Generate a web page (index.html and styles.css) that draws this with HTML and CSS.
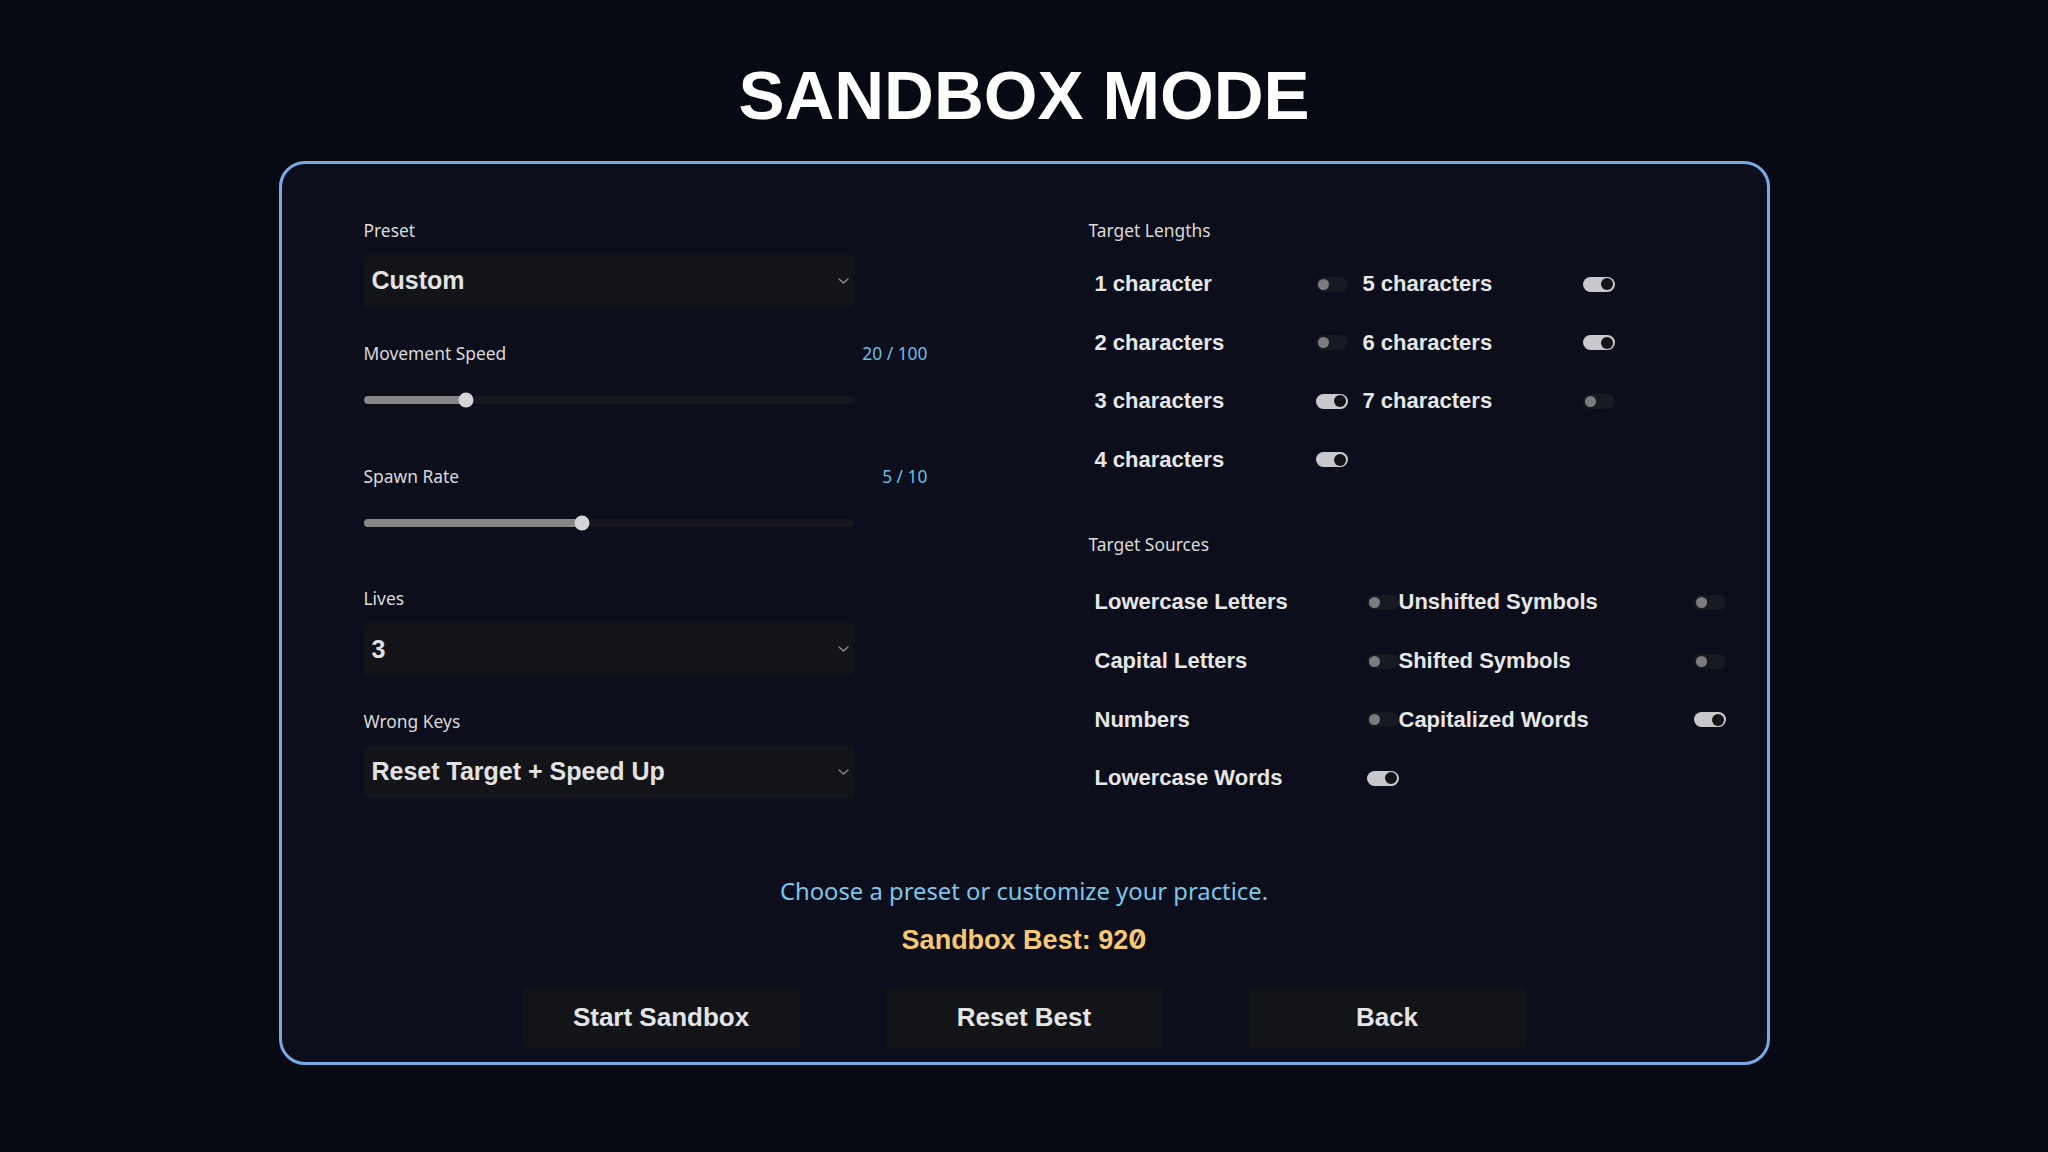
FILE: index.html
```html
<!DOCTYPE html>
<html lang="en">
<head>
<meta charset="utf-8">
<title>Sandbox Mode</title>
<link rel="stylesheet" href="styles.css">
</head>
<body>
<main class="screen">
  <h1 class="title">SANDBOX MODE</h1>
  <section class="panel">
    <div class="columns">
      <div class="settings">
        <div class="field">
          <div class="field-head"><span class="label">Preset</span></div>
          <div class="select">
            <span class="select-value">Custom</span>
            <svg class="chevron" viewBox="0 0 11 6" width="11" height="6"><path d="M1 1L5.5 5L10 1"/></svg>
          </div>
        </div>
        <div class="field">
          <div class="field-head"><span class="label">Movement Speed</span><span class="value">20 / 100</span></div>
          <div class="slider-wrap">
            <div class="slider">
              <div class="fill" style="width:102px"></div>
              <div class="thumb" style="left:102px"></div>
            </div>
          </div>
        </div>
        <div class="field">
          <div class="field-head"><span class="label">Spawn Rate</span><span class="value">5 / 10</span></div>
          <div class="slider-wrap">
            <div class="slider">
              <div class="fill" style="width:218px"></div>
              <div class="thumb" style="left:218px"></div>
            </div>
          </div>
        </div>
        <div class="field">
          <div class="field-head"><span class="label">Lives</span></div>
          <div class="select">
            <span class="select-value">3</span>
            <svg class="chevron" viewBox="0 0 11 6" width="11" height="6"><path d="M1 1L5.5 5L10 1"/></svg>
          </div>
        </div>
        <div class="field">
          <div class="field-head"><span class="label">Wrong Keys</span></div>
          <div class="select">
            <span class="select-value">Reset Target + Speed Up</span>
            <svg class="chevron" viewBox="0 0 11 6" width="11" height="6"><path d="M1 1L5.5 5L10 1"/></svg>
          </div>
        </div>
      </div>

      <div class="targets">
        <div class="section">
          <div class="label">Target Lengths</div>
          <div class="toggle-grid lengths">
            <div class="toggle-item"><span class="item-label">1 character</span><span class="toggle"></span></div>
            <div class="toggle-item"><span class="item-label">2 characters</span><span class="toggle"></span></div>
            <div class="toggle-item"><span class="item-label">3 characters</span><span class="toggle on"></span></div>
            <div class="toggle-item"><span class="item-label">4 characters</span><span class="toggle on"></span></div>
            <div class="toggle-item"><span class="item-label">5 characters</span><span class="toggle on"></span></div>
            <div class="toggle-item"><span class="item-label">6 characters</span><span class="toggle on"></span></div>
            <div class="toggle-item"><span class="item-label">7 characters</span><span class="toggle"></span></div>
          </div>
        </div>
        <div class="section sources-section">
          <div class="label">Target Sources</div>
          <div class="toggle-grid sources">
            <div class="toggle-item"><span class="item-label">Lowercase Letters</span><span class="toggle"></span></div>
            <div class="toggle-item"><span class="item-label">Capital Letters</span><span class="toggle"></span></div>
            <div class="toggle-item"><span class="item-label">Numbers</span><span class="toggle"></span></div>
            <div class="toggle-item"><span class="item-label">Lowercase Words</span><span class="toggle on"></span></div>
            <div class="toggle-item"><span class="item-label">Unshifted Symbols</span><span class="toggle"></span></div>
            <div class="toggle-item"><span class="item-label">Shifted Symbols</span><span class="toggle"></span></div>
            <div class="toggle-item"><span class="item-label">Capitalized Words</span><span class="toggle on"></span></div>
          </div>
        </div>
      </div>
    </div>

    <div class="footer">
      <p class="hint">Choose a preset or customize your practice.</p>
      <p class="best">Sandbox Best: 92<span class="zero">0</span></p>
      <div class="buttons">
        <button class="btn">Start Sandbox</button>
        <button class="btn">Reset Best</button>
        <button class="btn">Back</button>
      </div>
    </div>
  </section>
</main>
</body>
</html>
```

FILE: styles.css
```css
* {
  box-sizing: border-box;
}

html, body {
  margin: 0;
  padding: 0;
}

body {
  background: #080a13;
  color: #e6e6e6;
  font-family: "Liberation Sans", Arial, sans-serif;
  width: 2048px;
  height: 1152px;
  overflow: hidden;
}

.screen {
  display: flex;
  flex-direction: column;
  align-items: center;
}

.title {
  margin: 56px 0 0;
  height: 105px;
  font-family: "Liberation Sans", Arial, sans-serif;
  font-weight: 700;
  font-size: 69px;
  line-height: 80px;
  color: #ffffff;
  letter-spacing: 0;
}

.panel {
  width: 1491px;
  border: 3px solid #7aaae6;
  border-radius: 26px;
  background: #0c0e1b;
  padding: 54px 0 14px;
}

.columns {
  display: grid;
  grid-template-columns: 564px 1fr;
  column-gap: 161px;
  align-items: start;
  padding: 0 41px 0 82px;
}

.settings {
  display: flex;
  flex-direction: column;
  gap: 33.75px;
}

.field {
  display: flex;
  flex-direction: column;
  gap: 12.5px;
}

.field-head {
  display: flex;
  justify-content: space-between;
  align-items: center;
  height: 24px;
}

.label {
  font-family: "Noto Sans", "Open Sans", sans-serif;
  font-size: 17.4px;
  line-height: 24px;
  color: #dadada;
}

.value {
  font-family: "Noto Sans", "Open Sans", sans-serif;
  font-size: 17.4px;
  line-height: 24px;
  color: #6cbde6;
}

.select {
  width: 490px;
  height: 52.5px;
  background: #131418;
  border-radius: 3px;
  display: flex;
  align-items: center;
  justify-content: space-between;
  padding: 0 5px 0 8px;
}

.select-value {
  font-family: "Liberation Sans", Arial, sans-serif;
  font-weight: 700;
  font-size: 25px;
  color: #e2e2e2;
}

.chevron {
  display: block;
}

.chevron path {
  fill: none;
  stroke: #8d8d8f;
  stroke-width: 1.4;
  stroke-linecap: round;
  stroke-linejoin: round;
}

.slider-wrap {
  height: 52.5px;
  padding-bottom: 7px;
  display: flex;
  align-items: center;
}

.slider {
  position: relative;
  width: 490px;
  height: 8px;
  border-radius: 4px;
  background: #15171c;
}

.fill {
  height: 100%;
  border-radius: 4px;
  background: #878787;
}

.thumb {
  position: absolute;
  top: 50%;
  width: 15px;
  height: 15px;
  border-radius: 50%;
  background: #d4d4d6;
  transform: translate(-50%, -50%);
}

.targets {
  display: flex;
  flex-direction: column;
}

.toggle-grid {
  display: grid;
  grid-auto-flow: column;
  grid-template-rows: repeat(4, 36px);
  row-gap: 22.6px;
  padding-left: 6px;
}

.lengths {
  margin-top: 24.2px;
  grid-template-columns: 253px 252px;
  column-gap: 15px;
}

.sources-section {
  margin-top: 54px;
}

.sources {
  margin-top: 28.5px;
  grid-template-columns: 304px 327px;
  column-gap: 0;
}

.toggle-item {
  display: flex;
  align-items: center;
  justify-content: space-between;
}

.item-label {
  font-family: "Liberation Sans", Arial, sans-serif;
  font-weight: 700;
  font-size: 22px;
  color: #e6e6e6;
  white-space: nowrap;
}

.toggle {
  position: relative;
  flex: none;
  width: 32px;
  height: 15px;
  border-radius: 8px;
  background: #181a21;
}

.toggle::after {
  content: "";
  position: absolute;
  top: 2px;
  left: 2px;
  width: 11px;
  height: 11px;
  border-radius: 50%;
  background: #7c7c80;
}

.toggle.on {
  background: #c9c9cd;
}

.toggle.on::after {
  top: 1.5px;
  left: auto;
  right: 1.5px;
  width: 12px;
  height: 12px;
  background: #141416;
}

.footer {
  display: flex;
  flex-direction: column;
  align-items: center;
  margin-top: 77.8px;
}

.hint {
  margin: 0;
  font-family: "Noto Sans", "Open Sans", sans-serif;
  font-size: 23.8px;
  line-height: 30px;
  color: #7cc6ea;
}

.best {
  margin: 16.6px 0 0;
  font-family: "Liberation Sans", Arial, sans-serif;
  font-weight: 700;
  font-size: 27px;
  line-height: 36px;
  color: #f6c873;
}

.zero {
  font-family: "Inter", sans-serif;
  font-weight: 700;
  font-variant-numeric: slashed-zero;
  font-feature-settings: "zero" 1;
}

.buttons {
  display: flex;
  gap: 86px;
  margin-top: 28.3px;
}

.btn {
  width: 277px;
  height: 61.5px;
  border: none;
  border-radius: 3px;
  background: #131418;
  color: #e4e4e4;
  font-family: "Liberation Sans", Arial, sans-serif;
  font-weight: 700;
  font-size: 26px;
  padding: 0;
}
```
